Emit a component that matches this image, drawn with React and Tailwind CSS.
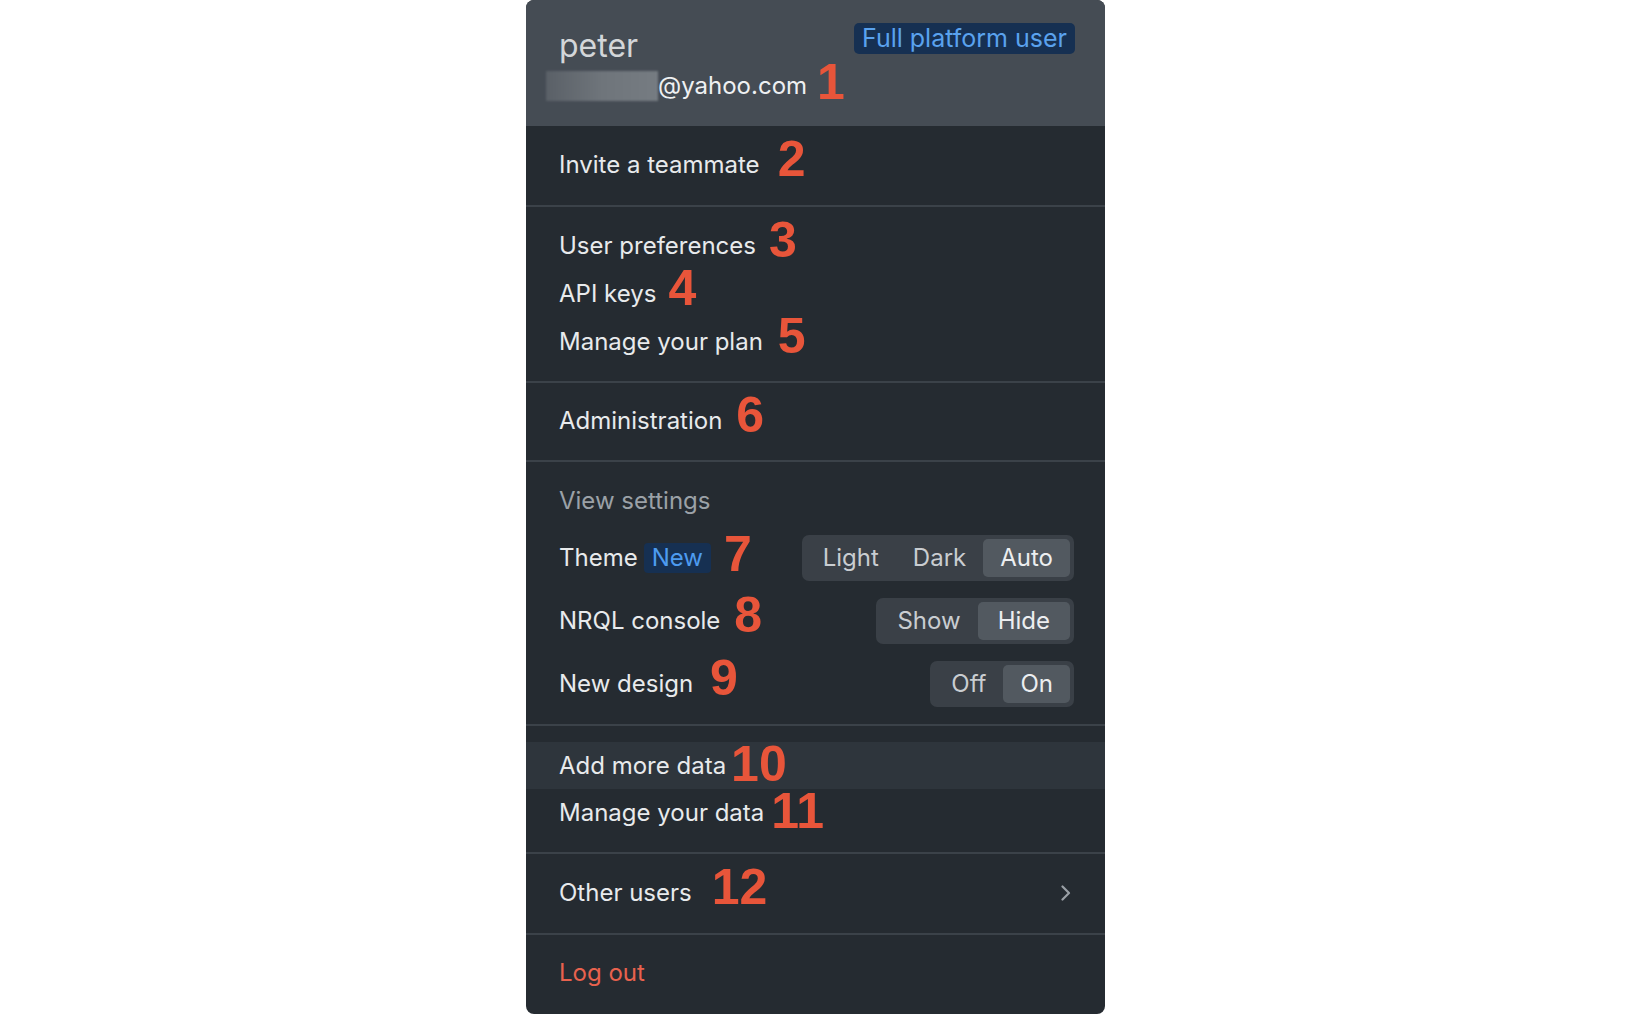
import React from "react";

function Num({ n, ml }) {
  return (
    <span
      className={`absolute left-full bottom-[-5px] ${ml} font-['Liberation_Sans',Arial,sans-serif] font-bold text-[50px] leading-none text-[#e8553a] whitespace-nowrap`}
    >
      {n}
    </span>
  );
}

function Label({ children, n, ml = "ml-[16px]", className = "" }) {
  return (
    <span className={`relative ${className}`}>
      {children}
      <Num n={n} ml={ml} />
    </span>
  );
}

function Segmented({ options, selected, wide }) {
  return (
    <div className="flex rounded-[7px] bg-[#3a4047] p-[4px]">
      {options.map((o) => (
        <div
          key={o}
          className={`h-[38px] ${o === wide ? "px-[20px]" : "px-[17px]"} flex items-center rounded-[5px] text-[24px] ${
            o === selected ? "bg-[#525960] text-[#eceef0]" : "text-[#c9cdd1]"
          }`}
        >
          {o}
        </div>
      ))}
    </div>
  );
}

export default function App() {
  return (
    <div className="w-[1632px] h-[1014px] bg-white font-['Inter',sans-serif] overflow-hidden">
      <div className="ml-[526px] w-[579px] h-[1014px] bg-[#252b31] rounded-[8px] overflow-hidden text-[24px] text-[#e8eaec]">
        {/* Header */}
        <div className="h-[126px] bg-[#454c54] flex justify-between pl-[33px] pr-[30px]">
          <div className="pt-[28px]">
            <div className="text-[32px] leading-[36px] text-[#d3d6d9]">peter</div>
            <div className="mt-[6px] flex items-center leading-[32px]">
              <div className="-ml-[13px] w-[112px] h-[30px] bg-gradient-to-r from-[#5a6067] via-[#6f757b] to-[#767c82] blur-[1px]" />
              <Label n="1" ml="ml-[10px]">
                <span className="text-[#eef0f2]">@yahoo.com</span>
              </Label>
            </div>
          </div>
          <div className="pt-[23px]">
            <div className="h-[31px] px-[8px] rounded-[5px] bg-[#163052] text-[#5aa2ee] text-[25px] leading-[31px] whitespace-nowrap">
              Full platform user
            </div>
          </div>
        </div>

        {/* Invite */}
        <div className="pl-[33px] pt-[23px] pb-[24px] border-b-2 border-[#3b4249]">
          <div className="leading-[32px]">
            <Label n="2" ml="ml-[18px]">Invite a teammate</Label>
          </div>
        </div>

        {/* Prefs */}
        <div className="pl-[33px] pt-[23px] pb-[23px] border-b-2 border-[#3b4249] flex flex-col gap-[16px]">
          <div className="leading-[32px]">
            <Label n="3" ml="ml-[13px]">User preferences</Label>
          </div>
          <div className="leading-[32px]">
            <Label n="4" ml="ml-[12px]">API keys</Label>
          </div>
          <div className="leading-[32px]">
            <Label n="5" ml="ml-[15px]">Manage your plan</Label>
          </div>
        </div>

        {/* Administration */}
        <div className="pl-[33px] pt-[22px] pb-[23px] border-b-2 border-[#3b4249]">
          <div className="leading-[32px]">
            <Label n="6" ml="ml-[14px]">Administration</Label>
          </div>
        </div>

        {/* View settings */}
        <div className="pl-[33px] pr-[31px] pt-[23px] pb-[17px] border-b-2 border-[#3b4249]">
          <div className="leading-[32px] text-[#9ba1a7]">View settings</div>
          <div className="mt-[18px] flex flex-col gap-[17px]">
            <div className="h-[46px] flex items-center justify-between">
              <div className="flex items-center leading-[32px]">
                <span>Theme</span>
                <Label n="7" ml="ml-[13px]" className="ml-[6px]">
                  <span className="inline-block px-[8px] h-[30px] leading-[30px] rounded-[4px] bg-[#163052] text-[#4d9bf0]">
                    New
                  </span>
                </Label>
              </div>
              <Segmented options={["Light", "Dark", "Auto"]} selected="Auto" />
            </div>
            <div className="h-[46px] flex items-center justify-between">
              <div className="leading-[32px]">
                <Label n="8" ml="ml-[14px]">NRQL console</Label>
              </div>
              <Segmented options={["Show", "Hide"]} selected="Hide" wide="Hide" />
            </div>
            <div className="h-[46px] flex items-center justify-between">
              <div className="leading-[32px]">
                <Label n="9" ml="ml-[17px]">New design</Label>
              </div>
              <Segmented options={["Off", "On"]} selected="On" />
            </div>
          </div>
        </div>

        {/* Data */}
        <div className="pt-[16px] pb-[15px] border-b-2 border-[#3b4249]">
          <div className="h-[47px] bg-[#2e353c] pl-[33px] flex items-center">
            <Label n="10" ml="ml-[5px]">Add more data</Label>
          </div>
          <div className="h-[48px] pl-[33px] flex items-center">
            <Label n="11" ml="ml-[7px]">Manage your data</Label>
          </div>
        </div>

        {/* Other users */}
        <div className="pl-[33px] pr-[29px] pt-[23px] pb-[24px] border-b-2 border-[#3b4249] flex items-center justify-between">
          <div className="leading-[32px]">
            <Label n="12" ml="ml-[20px]">Other users</Label>
          </div>
          <svg width="10" height="16" viewBox="0 0 10 16" className="mr-[5px]">
            <polyline points="1.5,1.5 8,8 1.5,14.5" fill="none" stroke="#9aa0a6" strokeWidth="2.2" strokeLinecap="round" strokeLinejoin="round" />
          </svg>
        </div>

        {/* Log out */}
        <div className="pl-[33px] pt-[22px]">
          <div className="leading-[32px] text-[#e8624e]">Log out</div>
        </div>
      </div>
    </div>
  );
}
